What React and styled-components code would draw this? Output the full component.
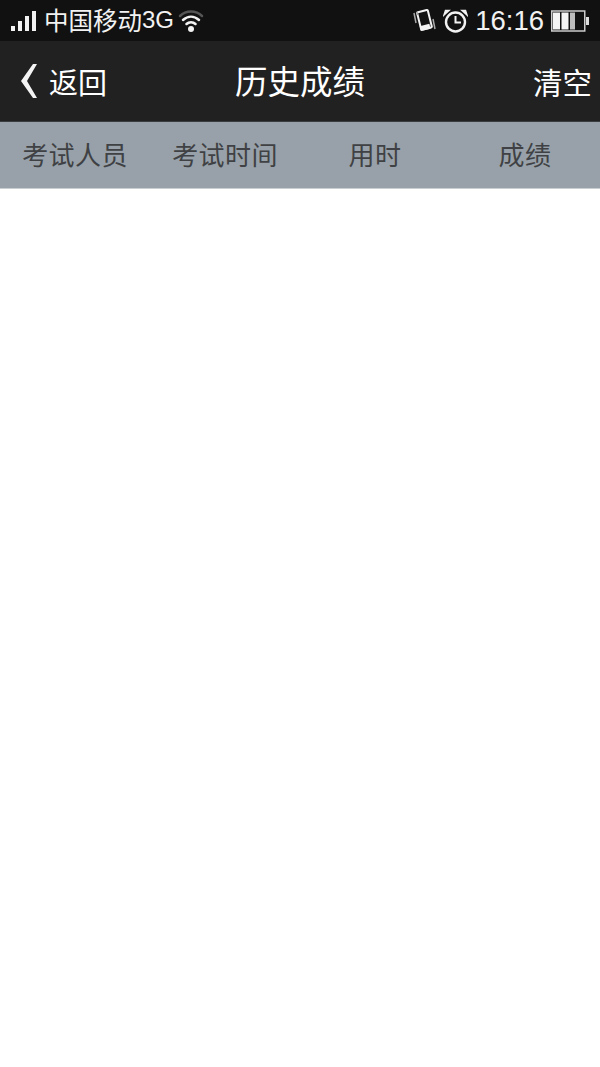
import React from "react";
import styled, { createGlobalStyle } from "styled-components";

const Global = createGlobalStyle`
  html, body { margin: 0; padding: 0; background: #fff; }
  body { font-family: "Noto Sans CJK SC", "Liberation Sans", sans-serif; }
`;
const Page = styled.div`
  width: 600px; height: 1067px; background: #fff; overflow: hidden;
  display: flex; flex-direction: column;
`;
const StatusBar = styled.div`
  height: 41px; background: #111; color: #f2f2f2; display: flex; align-items: center;
  justify-content: space-between; padding: 0 11px 0 11px; box-sizing: border-box;
`;
const StatusGroup = styled.div`
  display: flex; align-items: center;
`;
const Carrier = styled.span`
  font-size: 24.5px; line-height: 41px; margin-left: 7px; display: flex; align-items: center;
  font-family: "Noto Sans CJK SC", sans-serif; font-weight: 400; padding-bottom: 2px;
`;
const Network = styled.span`
  font-family: "Liberation Sans", sans-serif; font-size: 24px;
`;
const Clock = styled.span`
  font-family: "Liberation Sans", sans-serif; font-size: 27.5px; line-height: 41px; margin: 0 7px 0 7px;
`;
const NavBar = styled.div`
  height: 81px; background: #212121; display: grid; grid-template-columns: 1fr auto 1fr;
  align-items: center; color: #fff; box-sizing: border-box; padding: 0 8px 1px 8px;
  border-bottom: 1px solid #3a3d40;
`;
const Back = styled.div`
  display: flex; align-items: center; gap: 11px; font-size: 29px; margin-left: 12px;
`;
const Title = styled.div`
  font-size: 32.5px; line-height: 1;
`;
const Clear = styled.div`
  font-size: 29.5px; justify-self: end;
`;
const TableHead = styled.div`
  height: 66px; background: #98a1a9; display: grid; grid-template-columns: repeat(4, 150px);
  align-items: center; border-bottom: 1px solid #c8ced2;
`;
const HeadCell = styled.div`
  text-align: center; font-size: 26px; letter-spacing: 0.4px; color: #3f4144; font-weight: 400;
  margin-bottom: 4px;
`;

const Signal = () => (
  <svg width="26" height="22" viewBox="0 0 26 22">
    <rect x="0" y="16" width="4" height="5" fill="#f2f2f2" />
    <rect x="7" y="11" width="4" height="10" fill="#f2f2f2" />
    <rect x="14" y="6" width="4" height="15" fill="#f2f2f2" />
    <rect x="21" y="1" width="4" height="20" fill="#f2f2f2" />
  </svg>
);
const Wifi = () => (
  <svg width="26" height="24" viewBox="0 0 26 24" fill="none" strokeLinecap="round" style={{ marginLeft: 4 }}>
    <path d="M2 7 C8 1 18 1 24 7" stroke="#555" strokeWidth="2.5" />
    <path d="M5 11 C10 6.5 16 6.5 21 11" stroke="#f2f2f2" strokeWidth="2.5" />
    <path d="M8.5 15 C11 12.5 15 12.5 17.5 15" stroke="#f2f2f2" strokeWidth="2.5" />
    <circle cx="13" cy="20" r="3" fill="#f2f2f2" />
  </svg>
);
const Vibrate = () => (
  <svg width="26" height="24" viewBox="0 0 26 24" fill="none">
    <rect x="7" y="2" width="11" height="18" rx="1" transform="rotate(-14 12 11)" stroke="#f2f2f2" strokeWidth="2" />
    <path d="M2 4 L4 14 M5 3 L5.5 6" stroke="#aaa" strokeWidth="1.5" />
    <path d="M21 10 L23 20" stroke="#aaa" strokeWidth="1.5" />
    <rect x="8" y="16" width="10" height="5" transform="rotate(-14 13 18)" fill="#f2f2f2" />
  </svg>
);
const Alarm = () => (
  <svg width="25" height="24" viewBox="0 0 25 24" fill="none" style={{ marginLeft: 5 }}>
    <circle cx="12.5" cy="13" r="9.5" stroke="#f2f2f2" strokeWidth="2.4" />
    <path d="M12.5 7 V13.5 H18" stroke="#f2f2f2" strokeWidth="2" />
    <path d="M1 6 L6 1.5 L2.5 1.5 Z M24 6 L19 1.5 L22.5 1.5 Z" fill="#f2f2f2" stroke="#f2f2f2" strokeWidth="1.5" />
  </svg>
);
const Battery = () => (
  <svg width="38" height="22" viewBox="0 0 38 22">
    <rect x="0.75" y="1" width="33" height="20" fill="#111" stroke="#ccc" strokeWidth="1.5" />
    <rect x="2" y="2.5" width="7" height="17" fill="#f4f4f4" />
    <rect x="10.5" y="2.5" width="7" height="17" fill="#f4f4f4" />
    <rect x="19" y="2.5" width="5" height="17" fill="#bdbdbd" />
    <rect x="35" y="7" width="3" height="8" fill="#ddd" />
  </svg>
);
const Chevron = () => (
  <svg width="18" height="36" viewBox="0 0 18 36">
    <path d="M13 1 L1 18 L13 35 L17 35 L7 18 L17 1 Z" fill="#f4f4f4" />
  </svg>
);

export default function App() {
  return (
    <Page>
      <Global />
      <StatusBar>
        <StatusGroup>
          <Signal />
          <Carrier>中国移动<Network>3G</Network></Carrier>
          <Wifi />
        </StatusGroup>
        <StatusGroup>
          <Vibrate />
          <Alarm />
          <Clock>16:16</Clock>
          <Battery />
        </StatusGroup>
      </StatusBar>
      <NavBar>
        <Back>
          <Chevron />
          <span>返回</span>
        </Back>
        <Title>历史成绩</Title>
        <Clear>清空</Clear>
      </NavBar>
      <TableHead>
        <HeadCell>考试人员</HeadCell>
        <HeadCell>考试时间</HeadCell>
        <HeadCell>用时</HeadCell>
        <HeadCell>成绩</HeadCell>
      </TableHead>
    </Page>
  );
}
